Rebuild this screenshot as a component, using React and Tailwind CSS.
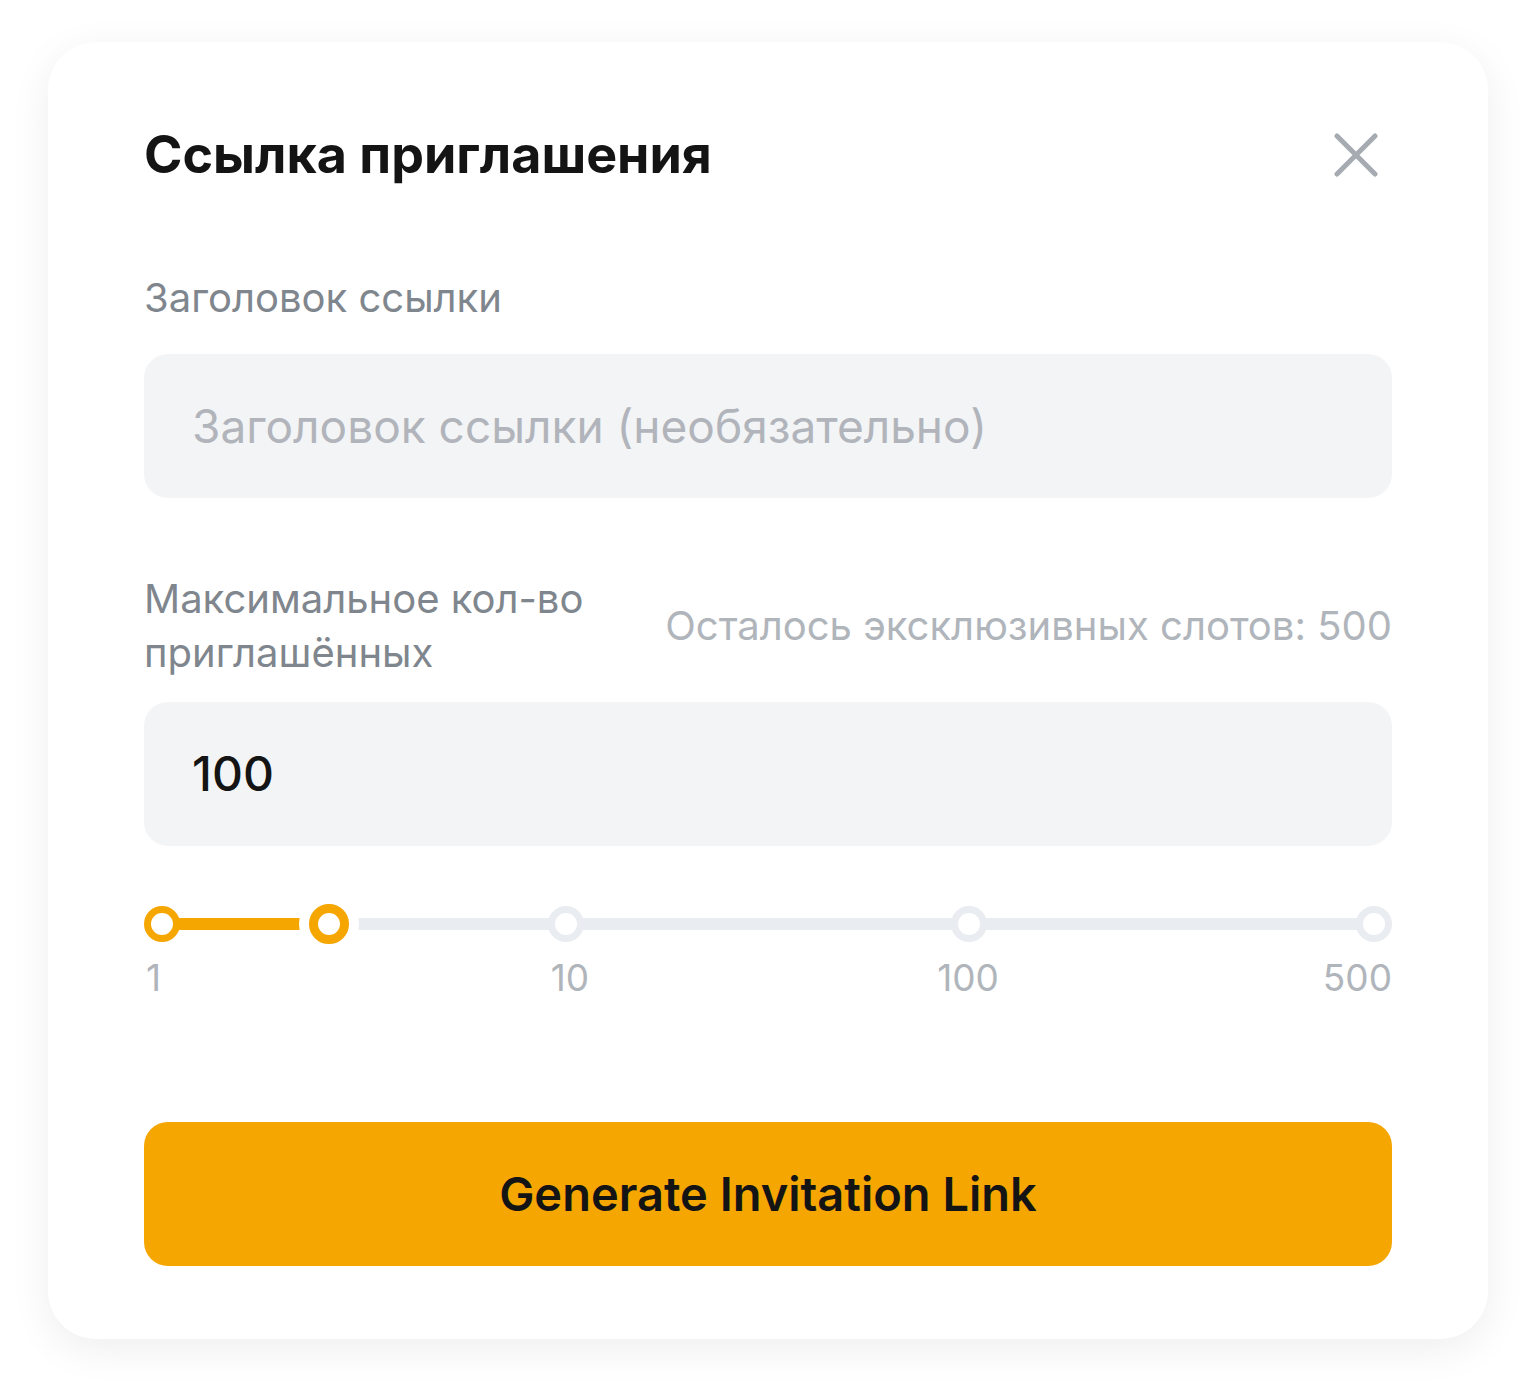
import React from "react";

const font = { fontFamily: "Inter, 'Noto Sans', sans-serif" };

function CloseIcon() {
  return (
    <svg width="44" height="44" viewBox="0 0 44 44" fill="none">
      <path d="M3 3L41 41M41 3L3 41" stroke="#a6abb2" strokeWidth="5" strokeLinecap="round" />
    </svg>
  );
}

function Slider() {
  const ticks = [18, 422, 825, 1230];
  const active = 185;
  return (
    <div className="mt-[58px]">
      <div className="relative h-[40px] w-full">
        <div className="absolute left-[18px] right-[18px] top-[14px] h-[12px] rounded-full bg-[#e9ecf0]" />
        <div className="absolute left-[18px] top-[14px] h-[12px] bg-[#f6a600]" style={{ width: active - 18 }} />
        {ticks.map((c, i) => (
          <div
            key={i}
            className={`absolute top-[2px] h-[36px] w-[36px] rounded-full bg-white border-[7px] ${i === 0 ? "border-[#f6a600]" : "border-[#e9ecf0]"}`}
            style={{ left: c - 18 }}
          />
        ))}
        <div
          className="absolute top-0 h-[40px] w-[40px] rounded-full bg-white border-[9px] border-[#f6a600] shadow-[0_0_0_10px_#ffffff]"
          style={{ left: active - 20 }}
        />
      </div>
      <div className="relative mt-[7px] h-[54px] text-[37px] leading-[54px] text-[#b0b5bb]">
        <span className="absolute left-[2px]">1</span>
        <span className="absolute -translate-x-1/2" style={{ left: 426 }}>10</span>
        <span className="absolute -translate-x-1/2" style={{ left: 824 }}>100</span>
        <span className="absolute right-0">500</span>
      </div>
    </div>
  );
}

export default function App() {
  return (
    <div className="min-h-[1392px] w-[1536px] bg-white pl-[48px] pt-[42px]" style={font}>
      <div className="w-[1440px] rounded-[48px] bg-white px-[96px] pt-[71px] pb-[73px] shadow-[0_10px_40px_rgba(0,0,0,0.07)]">
        <div className="flex items-center justify-between">
          <h1 className="text-[52px] font-bold leading-[84px] text-[#141414]">Ссылка приглашения</h1>
          <div className="flex h-[72px] w-[72px] items-center justify-center">
            <CloseIcon />
          </div>
        </div>

        <div className="mt-[74px] text-[40px] leading-[54px] text-[#80868d]">Заголовок ссылки</div>
        <div className="mt-[29px] flex h-[144px] items-center rounded-[24px] bg-[#f3f4f6] px-[48px]">
          <span className="text-[46px] text-[#b1b5bb]">Заголовок ссылки (необязательно)</span>
        </div>

        <div className="mt-[74px] flex items-center justify-between">
          <div className="w-[480px] text-[40px] leading-[54px] text-[#80868d]">Максимальное кол-во приглашённых</div>
          <div className="text-[40px] leading-[54px] text-[#b0b5bb]">Осталось эксклюзивных слотов: 500</div>
        </div>
        <div className="mt-[22px] flex h-[144px] items-center rounded-[24px] bg-[#f3f4f6] px-[48px]">
          <span className="text-[48px] font-medium text-[#141414]">100</span>
        </div>

        <Slider />

        <button className="mt-[117px] flex h-[144px] w-full items-center justify-center rounded-[24px] bg-[#f6a600]">
          <span className="text-[47px] font-semibold text-[#141414]">Generate Invitation Link</span>
        </button>
      </div>
    </div>
  );
}
